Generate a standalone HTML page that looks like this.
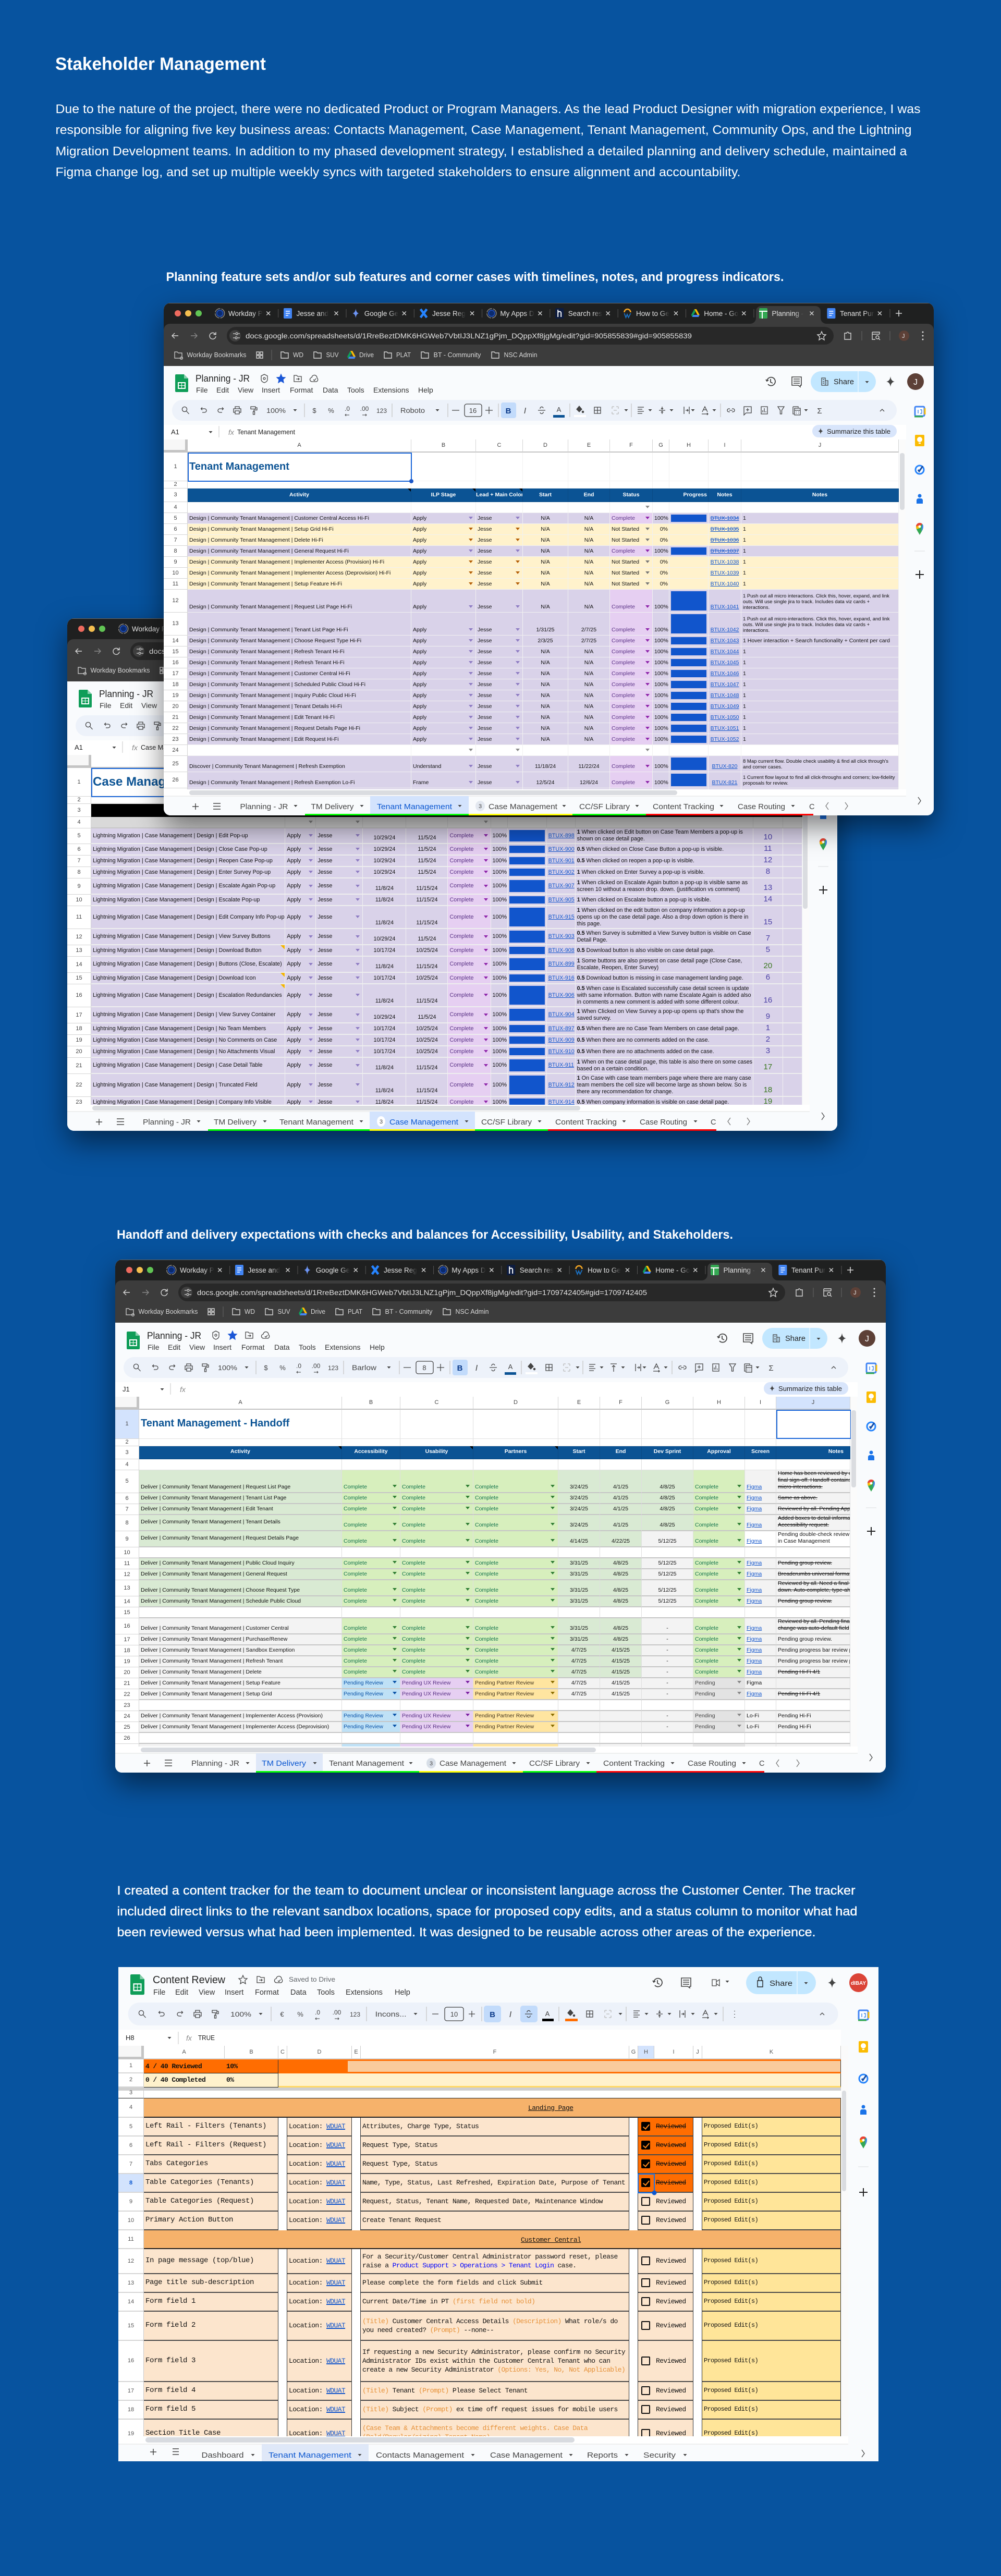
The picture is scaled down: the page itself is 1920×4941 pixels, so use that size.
<!DOCTYPE html>
<html lang="en"><head><meta charset="utf-8"><title>Stakeholder Management</title>
<style>
html,body{margin:0;padding:0;background:#07539f}
#p{position:relative;width:1920px;height:4941px;overflow:hidden;background:#07539f;font-family:"Liberation Sans",sans-serif}
svg text{font-family:"Liberation Sans",sans-serif}
.w{position:absolute;background:#f9fbfd;overflow:hidden;border-radius:13px;box-shadow:0 22px 55px rgba(0,0,0,.5)}
.s{position:absolute;left:0;top:262px;width:1410px;height:671px;overflow:hidden;background:#fff}
.c{position:absolute;left:0;top:0}
table{border-collapse:separate;border-spacing:0;table-layout:fixed;width:100%;font:10.5px/13px "Liberation Sans",sans-serif;color:#111}
td,th{padding:0 3px 3px;border-right:1px solid #f1f1f1;border-bottom:1px solid #f1f1f1;white-space:nowrap;overflow:hidden;box-sizing:border-box;position:relative;font-weight:400;vertical-align:bottom;text-align:left}
tr{height:21px}
.h14{height:14px}.h25{height:25px}.h26{height:26px}.h31{height:31px}.h44{height:44px}.h55{height:55px}.h56{height:56px}
th{text-align:center;vertical-align:middle;background:#fff;color:#444;border-color:#d4d4d4;padding:0;font-size:11px}
.l th{border-bottom:2px solid #c4c4c4;border-right:1px solid #d4d4d4;color:#444;font-size:11px}
.l th:first-child{background:#f7f7f7;border-right:5px solid #c4c4c4;border-bottom:5px solid #c4c4c4}
.hd td{background:#0b5394;color:#fff;font-weight:700;text-align:center;vertical-align:middle;padding:0;border-color:#0a4a85}
.n::before{content:"";position:absolute;top:0;right:0;border:3px solid;border-color:#000 #000 transparent transparent}
.nt::before{content:"";position:absolute;top:0;right:0;border:4px solid;border-color:#f4b400 #f4b400 transparent transparent}
.ti{font-size:20px;line-height:24px;font-weight:700;color:#0b5394;padding:0 0 0 3px;vertical-align:middle;overflow:visible}
.p{background:#d9d2e9}.y{background:#fff2cc}
.d::after{content:"";position:absolute;right:5px;bottom:8px;border-left:4px solid transparent;border-right:4px solid transparent;border-top:5px solid #8e7cc3}
.y .d::after{border-top-color:#b45f06}
.e .d::after{border-top-color:#8a8a8a}
.c1{background:#e6cff2;color:#5a3286}
.c1.d::after{border-top-color:#8e24aa}
.b{background:#1155cc;box-shadow:inset 0 0 0 3px #d9d2e9}
.ne{color:#111}.ne.d::after{border-top-color:#777}
u{color:#1155cc}
.xx{text-decoration:underline line-through;color:#1155cc}
.w1 td:nth-child(5),.w1 td:nth-child(6),.w1 td:nth-child(10){text-align:center}
.w1 td:nth-child(8){text-align:right;padding-right:2px}
.w2 table{font-size:10.75px}
.w2 td{vertical-align:middle;padding:0 3px;border-bottom:2px solid #eee}
.w2 td:nth-child(5),.w2 td:nth-child(6){vertical-align:bottom;text-align:center;padding-bottom:3px}
.w2 td:nth-child(8){text-align:right;padding-right:2px}
.w2 .d::after{bottom:auto;top:50%;margin-top:-3px}
.w2 td:nth-child(12){font-size:15px;line-height:18px;color:#4a3fa5;text-align:center;vertical-align:bottom;padding-bottom:2px}
.w2 td.gn{color:#38761d}
.w2 .ti{font-size:24px;line-height:28px;color:#0b5394;vertical-align:middle}
.w2 .bk td{background:#000;border-color:#000}
.w2 .gr td{background:#d9d9d9;border-color:#c8c8c8}
.w3 td{border-right:1px solid #dfdfdf;border-bottom:2px solid #c6c6c6;padding-bottom:3px}
.w3 .hd td{border-color:#0a4a85;border-bottom:1px solid #0a4a85}
.w3 .bl td{border-bottom:1px solid #e2e2e2}
.w3 .wt td{border-bottom:2px solid #c6c6c6}
.g td{background:#d9ead3}
.w3 td.z{background:#f3f3f3}
.w3 td.w0{background:#fff}
.w3 td.k{background:#d7efbd;color:#11734b}
.w3 td.r{background:#bfe1f6;color:#0a53a8}
.w3 td.v{background:#e6cff2;color:#5a3286}
.w3 td.a{background:#ffe5a0;color:#473821}
.w3 td.q{background:#e3e3e3;color:#444}
.w3 td.d::after{right:6px;bottom:9px;border-top-color:#2e7d32}
.w3 td.r.d::after{border-top-color:#0a53a8}
.w3 td.v.d::after{border-top-color:#7b1fa2}
.w3 td.a.d::after{border-top-color:#8a6d00}
.w3 td.q.d::after{border-top-color:#888}
.w3 td:nth-child(6),.w3 td:nth-child(7),.w3 td:nth-child(8){text-align:center}
.st{text-decoration:line-through}
.w4 td{background:#fce5cd;border-right:1px solid #333;border-bottom:2px solid #4a4a4a;padding:0 3px;vertical-align:middle;font:13px/17.3px "Liberation Mono",monospace;letter-spacing:-.6px;color:#111}
.w4 th{border-right:1px solid #ccc;border-bottom:2px solid #d6d6d6;color:#555}
.w4 td.f{font-size:14px;letter-spacing:-.4px}
.w4 td.o1{background:#fff;border-right:1px solid #333;border-bottom:0}
.w4 td.pe{background:#ffe599;font-size:12px;letter-spacing:-.7px}
.w4 td.sc{background:#f6b26b;text-decoration:none;border-bottom:2px solid #222}
.w4 td.sc span{text-decoration:underline;position:absolute;top:10px}
.w4 td.cb{padding:0;border-right:0}
.w4 td.or{background:#ff6d01}
.w4 td.sk{text-decoration:line-through}
.w4 i{position:absolute;left:6px;top:50%;margin-top:-9px;width:17px;height:17px;box-sizing:border-box;border:2px solid #111;border-radius:2px;background:#fff0;display:block}
.w4 .or i{background:#000;border-color:#000}
.w4 .or i::after{content:"";position:absolute;left:4px;top:0;width:5px;height:10px;border:solid #ff8a1f;border-width:0 2px 2px 0;transform:rotate(40deg)}
.w4 em{font-style:normal;color:#e69138}
.w4 td b{font-weight:400;color:#0000ff}
.w4 u{color:#1155cc;text-decoration-thickness:2px}
.w4 .tp td{border-bottom:1px solid #222}
</style></head><body><div id="p">

<svg width="0" height="0" style="position:absolute">
<defs>
<linearGradient id="tf"><stop offset=".72" stop-color="#e3e3e3"/><stop offset="1" stop-color="#e3e3e3" stop-opacity="0"/></linearGradient>
<g id="x"><path d="M-3.5-3.5L3.5 3.5M3.5-3.5L-3.5 3.5"/></g>
<g id="tri"><path d="M-3.5-2H3.5L0 2Z" fill="#444" stroke="none"/></g>
<g id="search"><circle cx="-2" cy="-2" r="4.6"/><path d="M1.5 1.5L6.5 7"/></g>
<g id="undo"><path d="M-3-5.5L-5.5-3-3-.5M-5.5-3H1.5a3.5 3.5 0 0 1 0 7H-3"/></g>
<g id="redo"><path d="M3-5.5L5.5-3 3-.5M5.5-3H-1.5a3.5 3.5 0 0 0 0 7H3"/></g>
<g id="print"><path d="M-4-3V-7H4V-3M-4 4H-7V-3H7V4H4M-4 1H4V7H-4Z"/></g>
<g id="paint"><path d="M-6-7H3V-2.5H-6ZM3-5H6V-.5H0V2.5M-1.5 2.5H1.5V8H-1.5Z"/></g>
<g id="strike"><path d="M-7 0H7M-3-3a3 3 0 0 1 6-1M3 3a3 3 0 0 1-6 1"/></g>
<g id="bucket"><path d="M-1-8L4-2-1 3-6-2Z" fill="#444"/><circle cx="6" cy="3" r="1.6" fill="#444"/></g>
<g id="border"><path d="M-6-6H6V6H-6ZM0-6V6M-6 0H6"/></g>
<g id="merge"><path d="M-6-7H-2M2-7H6M-6 7H-2M2 7H6M-6-7V-3M6-7V-3M-6 3V7M6 3V7M-3 0H3" stroke="#bbb"/></g>
<g id="align"><path d="M-6-6H6M-6-2H3M-6 2H6M-6 6H3"/></g>
<g id="valign"><path d="M-6 0H6M0-7V-2M-2-4L0-2 2-4M0 7V2M-2 4L0 2 2 4"/></g>
<g id="vtop"><path d="M-6-7H6M0 8V-4M-3-1L0-4 3-1"/></g>
<g id="wrap"><path d="M-5-7V7M5-7V7M-2 0H3M1-2L3 0 1 2"/></g>
<g id="rot"><path d="M-5 3L0-7 5 3M-3-1H3M-6 7H6M4 5L6 7 4 9"/></g>
<g id="link"><path d="M-2-3H-4a3 3 0 0 0 0 6H-2M2-3H4a3 3 0 0 1 0 6H2M-3 0H3"/></g>
<g id="cmt"><path d="M-7-7H7V5H-3L-7 9ZM0-4V2M-3-1H3"/></g>
<g id="chart"><path d="M-6-7H6V7H-6ZM-3 4V0M0 4V-4M3 4V2"/></g>
<g id="filter"><path d="M-6-7H6L1.5 0V7H-1.5V0Z"/></g>
<g id="calc"><path d="M-7-7H3V-5M-7-7V7H-5M-4-4H7V9H-4ZM-4 0H7M-1 3H0M3 3H4M-1 6H0M3 6H4"/></g>
<g id="caret"><path d="M-4 2L0-2 4 2"/></g>
<g id="hist"><path d="M-7-1a8 8 0 1 1 2 6M-9-4L-7-1-4-3M0-5V1L4 3" stroke-width="1.8"/></g>
<g id="cmts"><path d="M-9-9H9V7H7V10L3 7H-9ZM-6-5H6M-6-1H6M-6 3H6" stroke-width="1.6"/></g>
<g id="bldg"><path d="M-6-7H1V7H-6ZM1-2H6V7H1ZM-4-4H-1M-4 0H-1M-4 3H-1M3 1H4M3 4H4"/></g>
<g id="gem"><path d="M0-10Q1-1 8 0Q1 1 0 10Q-1 1-8 0Q-1-1 0-10Z" fill="#444" stroke="none"/></g>
<g id="back"><path d="M6 0H-6M-1-5L-6 0-1 5"/></g>
<g id="fwd"><path d="M-6 0H6M1-5L6 0 1 5"/></g>
<g id="reload"><path d="M5-3a6 6 0 1 0 1 4M6-7V-2.5H1.5"/></g>
<g id="star"><path d="M0-8L2.4-2.5 8-2 3.8 1.8 5 8 0 4.8-5 8-3.8 1.8-8-2-2.4-2.5Z"/></g>
<g id="folder"><path d="M-7-6H-2L0-4H7V6H-7Z"/></g>
<g id="mv"><path d="M-7-6H-2L0-4H7V6H-7ZM-3 1H3M1-1L3 1 1 3"/></g>
<g id="cloud"><path d="M-4 6a4 4 0 0 1-1-8 5 5 0 0 1 10 1 4 4 0 0 1-1 7ZM-2 2L0 4 3 0"/></g>
<g id="at"><path d="M-6-5L0-8 6-5V2C6 5 3 7 0 8-3 7-6 5-6 2Z"/><circle r="2"/></g>
<g id="grid"><path d="M-6-6H-1V-1H-6ZM1-6H6V-1H1ZM-6 1H-1V6H-6ZM1 1H6V6H1Z"/></g>
<g id="ext"><path d="M-6-5H-2a2 2 0 0 1 4 0H6V7H-6Z"/></g>
<g id="reader"><path d="M-7-7H7V-3M-7-7V7H-1M-7-3H7"/><circle cx="3" cy="3" r="3"/><path d="M5 5L8 8"/></g>
<g id="wday"><circle r="9" fill="none" stroke="#8a8a8a" stroke-dasharray="13 2"/><circle r="6" fill="#0a2a6e" stroke="#1e4bb0" stroke-width="2"/></g>
<g id="doc"><rect x="-8" y="-10" width="16" height="20" rx="2" fill="#4285f4" stroke="none"/><path d="M-4-4H4M-4 0H4M-4 4H1" stroke="#fff" stroke-width="1.6"/></g>
<g id="gmn"><path d="M0-9Q1-1 6 0Q1 1 0 9Q-1 1-6 0Q-1-1 0-9Z" fill="#6d95f5" stroke="none"/></g>
<g id="jira"><path d="M-6-8L6 8M6-8L-6 8" stroke="#2684ff" stroke-width="4.5"/></g>
<g id="hh"><rect x="-8" y="-10" width="16" height="20" rx="1" fill="#0d1c40" stroke="none"/><path d="M-3-7V7M-3-1a3 3 0 0 1 6 1V7" stroke="#fff" stroke-width="2"/></g>
<g id="wk"><path d="M-6 0a6 6 0 0 1 12 0" stroke="#f5a623" stroke-width="2.5"/><path d="M-6 2L-3 10-.5 4 2 10 6 2" stroke="#1a73c8" stroke-width="1.8"/></g>
<g id="drv"><path d="M-2-8H2L8 3H4Z" fill="#fbbc04" stroke="none"/><path d="M-2-8L-8 3-6 7 0-3Z" fill="#0f9d58" stroke="none"/><path d="M-6 7H6L8 3H-4Z" fill="#4285f4" stroke="none"/></g>
<g id="shs"><rect x="-8" y="-10" width="16" height="20" rx="2" fill="#34a853" stroke="none"/><path d="M-8-4H8M-2-4V10" stroke="#fff" stroke-width="2"/></g>
<g id="sheet"><path d="M2 0H17L25 8V32a2 2 0 0 1-2 2H2a2 2 0 0 1-2-2V2a2 2 0 0 1 2-2Z" fill="#0f9d58" stroke="none"/><path d="M17 0L25 8H17Z" fill="#87ceac" stroke="none"/><path fill-rule="evenodd" d="M5 15H20V28H5ZM7 17V21H12V17ZM13 17V21H18V17ZM7 22V26H12V22ZM13 22V26H18V22Z" fill="#fff" stroke="none"/></g>
<g id="cal"><rect x="-9" y="-9" width="18" height="18" rx="2" fill="#fff" stroke="#4285f4" stroke-width="3"/><path d="M-10 10H6" stroke="#34a853" stroke-width="3"/><path d="M10-6V6" stroke="#fbbc04" stroke-width="3"/><path d="M-3-3V4M1-3H4V4H1" stroke="#1a73e8" stroke-width="1.2" fill="none"/></g>
<g id="keep"><rect x="-9" y="-11" width="18" height="22" rx="2" fill="#fbbc04"/><circle cy="-2" r="5" fill="#fff"/><rect x="-2" y="4" width="4" height="2" fill="#fff"/></g>
<g id="tasks"><circle r="8" fill="none" stroke="#2684fc" stroke-width="3"/><path d="M-3 0L-1 3 6-7" fill="none" stroke="#174ea6" stroke-width="3"/></g>
<g id="cont"><circle cy="-6" r="3.5" fill="#1a73e8"/><path d="M-6 9V2a4 4 0 0 1 4-3h4a4 4 0 0 1 4 3V9Z" fill="#1a73e8"/></g>
<g id="maps"><path d="M0 13C-3 7-7 3-7-3a7 7 0 0 1 14 0C7 3 3 7 0 13Z" fill="#34a853"/><path d="M-7-3a7 7 0 0 1 12-5L-5 2Z" fill="#ea4335"/><path d="M5-8a7 7 0 0 1 2 5C7 0 5 3 3 6Z" fill="#4285f4"/><path d="M-7-3C-7 0-6 1-5 2L0 0-2-5Z" fill="#fbbc04"/><circle cy="-3" r="2.5" fill="#fff"/></g>
<g id="plus"><path d="M-8 0H8M0-8V8" stroke="#222" stroke-width="2" fill="none"/></g>

<g id="tbar" fill="none" stroke="#444" stroke-width="1.3">
<use href="#search" x="42"/><use href="#undo" x="77"/><use href="#redo" x="109"/><use href="#print" x="141"/><use href="#paint" x="173"/>
<use href="#tri" x="252"/><use href="#tri" x="525"/><use href="#tri" x="887" stroke="none"/>
<path d="M270-13V13M438-13V13M545-13V13M642-13V13M779-13V13M897-13V13M1068-13V13" stroke="#c7c7c7"/>
<path d="M553 0H567M617 0H631M624-7V7"/>
<rect x="577" y="-12" width="33" height="24" rx="4"/>
<rect x="647" y="-15" width="29" height="30" rx="4" fill="#c2dbfb" stroke="none"/>
<use href="#strike" x="725"/><use href="#bucket" x="798"/><rect x="787" y="9" width="23" height="4" fill="#fff" stroke="none"/><use href="#border" x="832"/><use href="#merge" x="866"/>
<use href="#align" x="915"/><use href="#tri" x="933"/><use href="#tri" x="974"/><use href="#wrap" x="1003"/><use href="#tri" x="1015"/><use href="#rot" x="1038"/><use href="#tri" x="1056"/>
<use href="#link" x="1088"/><use href="#cmt" x="1120"/><use href="#chart" x="1152"/><use href="#filter" x="1184"/><use href="#calc" x="1214"/><use href="#tri" x="1232"/><use href="#caret" x="1378"/>
<rect x="747" y="9" width="22" height="5" fill="#0b5394" stroke="none"/>
</g>

<g id="ctabs" fill="none" stroke="#d8d8d8" stroke-width="1.4">
<use href="#wday" x="107.7" y="20"/><use href="#doc" x="238" y="20"/><use href="#gmn" x="368.3" y="20"/><use href="#jira" x="498.6" y="20"/><use href="#wday" x="628.9" y="20"/><use href="#hh" x="759.2" y="20"/><use href="#wk" x="889.5" y="18"/><use href="#drv" x="1019.8" y="20"/><use href="#shs" x="1150" y="20"/><use href="#doc" x="1280.4" y="20"/>
<use href="#x" x="200.7" y="20"/><use href="#x" x="331" y="20"/><use href="#x" x="461.3" y="20"/><use href="#x" x="591.6" y="20"/><use href="#x" x="721.9" y="20"/><use href="#x" x="852.2" y="20"/><use href="#x" x="982.5" y="20"/><use href="#x" x="1112.8" y="20"/><use href="#x" x="1243" y="20"/><use href="#x" x="1373.4" y="20"/>
<path d="M219.7 12V28M350 12V28M480.3 12V28M610.6 12V28M740.9 12V28M871.2 12V28M1001.5 12V28M1132 12V28M1393 12V28" stroke="#555" stroke-width="1"/>
<path d="M1404 20H1416M1410 14V26" stroke-width="1.6"/>
<use href="#back" x="22" y="63"/><use href="#fwd" x="58" y="63" stroke="#888"/><use href="#reload" x="94" y="63"/>
<use href="#star" x="1262" y="63"/><use href="#ext" x="1312" y="63"/><path d="M1339 54V72M1393 54V72" stroke="#666" stroke-width="1"/><use href="#reader" x="1366" y="63"/>
<circle cx="1456" cy="56" r="1.5" fill="#ddd" stroke="none"/><circle cx="1456" cy="63" r="1.5" fill="#ddd" stroke="none"/><circle cx="1456" cy="70" r="1.5" fill="#ddd" stroke="none"/>
<circle cx="1420" cy="63" r="10" fill="#5d4037" stroke="none"/>
<path d="M133 59H137M143 59H146M133 67H136M142 67H146" stroke-width="1.2"/><circle cx="140" cy="59" r="2" stroke-width="1.2"/><circle cx="139" cy="67" r="2" stroke-width="1.2"/>
<path d="M21 94H26L28 96H35V106H21Z" stroke-width="1.2"/><circle cx="34" cy="106" r="2.5" stroke-width="1"/>
<use href="#grid" x="184" y="100"/><path d="M207 90V110" stroke="#666" stroke-width="1"/>
<use href="#folder" x="232" y="100"/><use href="#folder" x="295" y="100"/><use href="#drv" x="360" y="100"/><use href="#folder" x="430" y="100"/><use href="#folder" x="501" y="100"/><use href="#folder" x="636" y="100"/>
</g>

<g id="chead" fill="none" stroke="#444" stroke-width="1.3">
<use href="#at" x="193" y="145"/><use href="#star" x="225" y="145" fill="#1a56d6" stroke="#1a56d6"/><use href="#mv" x="257" y="145"/><use href="#cloud" x="289" y="145"/>
<use href="#hist" x="1164" y="151"/><use href="#cmts" x="1214" y="151"/>
<use href="#bldg" x="1268" y="151"/><use href="#tri" x="1349" y="152"/><use href="#gem" x="1394" y="151"/>
</g>

<g id="side"><use href="#cal" x="1450" y="208"/><use href="#keep" x="1450" y="264"/><use href="#tasks" x="1450" y="320"/><use href="#cont" x="1450" y="376"/><use href="#maps" x="1450" y="432"/><path d="M1440 476H1460" stroke="#dadce0"/><use href="#plus" x="1450" y="521"/><path d="M1447 948L1452 955 1447 962" fill="none" stroke="#444" stroke-width="1.3"/></g>

<g id="tsym" fill="none" stroke="#444" stroke-width="1.5"><path d="M55 966H67M61 960V972M95 960H109M95 965.5H109M95 971H109"/></g>
</defs>
</svg>

<svg class="c" width="1920" height="560" style="z-index:0">
<text x="106" y="134" font-size="34" font-weight="700" fill="#fff" textLength="404" lengthAdjust="spacingAndGlyphs">Stakeholder Management</text>
<g font-size="24" fill="#fff">
<text x="106.5" y="217" textLength="1659" lengthAdjust="spacingAndGlyphs">Due to the nature of the project, there were no dedicated Product or Program Managers. As the lead Product Designer with migration experience, I was</text>
<text x="106.5" y="257" textLength="1642" lengthAdjust="spacingAndGlyphs">responsible for aligning five key business areas: Contacts Management, Case Management, Tenant Management, Community Ops, and the Lightning</text>
<text x="106.5" y="298" textLength="1633" lengthAdjust="spacingAndGlyphs">Migration Development teams. In addition to my phased development strategy, I established a detailed planning and delivery schedule, maintained a</text>
<text x="106.5" y="338" textLength="1314" lengthAdjust="spacingAndGlyphs">Figma change log, and set up multiple weekly syncs with targeted stakeholders to ensure alignment and accountability.</text>
</g>
<text x="318.5" y="539" font-size="24" font-weight="700" fill="#fff" textLength="1185" lengthAdjust="spacingAndGlyphs">Planning feature sets and/or sub features and corner cases with timelines, notes, and progress indicators.</text>
</svg>

<!-- WINDOW 2 (behind) -->
<div class="w w2" style="left:129px;top:1186px;width:1477px;height:983px;z-index:1">
<div class="s"><table><colgroup><col style="width:46px"><col style="width:372px"><col style="width:59px"><col style="width:90px"><col style="width:83px"><col style="width:80px"><col style="width:82px"><col style="width:32px"><col style="width:75px"><col style="width:55px"><col style="width:341px"><col style="width:57px"><col style="width:37px"></colgroup>
<tr class="l h25"><th><th>A<th>B<th>C<th>D<th>E<th>F<th>G<th>H<th>I<th>J<th>K<th>L</tr>
<tr class="h55"><th>1<td class="ti">Case Management<td><td><td><td><td><td><td><td><td><td><td></tr>
<tr class="h14"><th>2<td><td><td><td><td><td><td><td><td><td><td><td></tr>
<tr class="bk h25"><th>3<td><td><td><td><td><td><td><td><td><td><td><td></tr>
<tr class="gr e" style="height:22px"><th>4<td><td class="d"><td class="d"><td><td><td class="d"><td><td><td><td><td><td></tr>
<tr class="p h31" style="height:30px"><th>5<td>Lightning Migration | Case Management | Design | Edit Pop-up<td class="d">Apply<td class="d">Jesse<td>10/29/24<td>11/5/24<td class="c1 d">Complete<td>100%<td class="b"><td><u>BTUX-898</u><td><b>1</b> When clicked on Edit button on Case Team Members a pop-up is<br>shown on case detail page.<td>10<td></tr>
<tr class="p"><th>6<td>Lightning Migration | Case Management | Design | Close Case Pop-up<td class="d">Apply<td class="d">Jesse<td>10/29/24<td>11/5/24<td class="c1 d">Complete<td>100%<td class="b"><td><u>BTUX-900</u><td><b>0.5</b> When clicked on Close Case Button a pop-up is visible.<td>11<td></tr>
<tr class="p"><th>7<td>Lightning Migration | Case Management | Design | Reopen Case Pop-up<td class="d">Apply<td class="d">Jesse<td>10/29/24<td>11/5/24<td class="c1 d">Complete<td>100%<td class="b"><td><u>BTUX-901</u><td><b>0.5</b> When clicked on reopen a pop-up is visible.<td>12<td></tr>
<tr class="p"><th>8<td>Lightning Migration | Case Management | Design | Enter Survey Pop-up<td class="d">Apply<td class="d">Jesse<td>10/29/24<td>11/5/24<td class="c1 d">Complete<td>100%<td class="b"><td><u>BTUX-902</u><td><b>1</b> When clicked on Enter Survey a pop-up is visible.<td>8<td></tr>
<tr class="p h31"><th>9<td>Lightning Migration | Case Management | Design | Escalate Again Pop-up<td class="d">Apply<td class="d">Jesse<td>11/8/24<td>11/15/24<td class="c1 d">Complete<td>100%<td class="b"><td><u>BTUX-907</u><td><b>1</b> When clicked on Escalate Again button a pop-up is visible same as<br>screen 10 without a reason drop. down. (justification vs comment)<td>13<td></tr>
<tr class="p"><th>10<td>Lightning Migration | Case Management | Design | Escalate Pop-up<td class="d">Apply<td class="d">Jesse<td>11/8/24<td>11/15/24<td class="c1 d">Complete<td>100%<td class="b"><td><u>BTUX-905</u><td><b>1</b> When clicked on Escalate button a pop-up is visible.<td>14<td></tr>
<tr class="p h44"><th>11<td>Lightning Migration | Case Management | Design | Edit Company Info Pop-up<td class="d">Apply<td class="d">Jesse<td>11/8/24<td>11/15/24<td class="c1 d">Complete<td>100%<td class="b"><td><u>BTUX-915</u><td><b>1</b> When clicked on the edit button on company information a pop-up<br>opens up on the case detail page. Also a drop down option is there in<br>this page.<td>15<td></tr>
<tr class="p h31"><th>12<td>Lightning Migration | Case Management | Design | View Survey Buttons<td class="d">Apply<td class="d">Jesse<td>10/29/24<td>11/5/24<td class="c1 d">Complete<td>100%<td class="b"><td><u>BTUX-903</u><td><b>0.5</b> When Survey is submitted a View Survey button is visible on Case<br>Detail Page.<td>7<td></tr>
<tr class="p"><th>13<td class="nt">Lightning Migration | Case Management | Design | Download Button<td class="d">Apply<td class="d">Jesse<td>10/17/24<td>10/25/24<td class="c1 d">Complete<td>100%<td class="b"><td><u>BTUX-908</u><td><b>0.5</b> Download button is also visible on case detail page.<td>5<td></tr>
<tr class="p h31"><th>14<td>Lightning Migration | Case Management | Design | Buttons (Close, Escalate)<td class="d">Apply<td class="d">Jesse<td>11/8/24<td>11/15/24<td class="c1 d">Complete<td>100%<td class="b"><td><u>BTUX-899</u><td><b>1</b> Some buttons are also present on case detail page (Close Case,<br>Escalate, Reopen, Enter Survey)<td class="gn">20<td></tr>
<tr class="p"><th>15<td class="nt">Lightning Migration | Case Management | Design | Download Icon<td class="d">Apply<td class="d">Jesse<td>10/17/24<td>10/25/24<td class="c1 d">Complete<td>100%<td class="b"><td><u>BTUX-916</u><td><b>0.5</b> Download button is missing in case management landing page.<td>6<td></tr>
<tr class="p h44"><th>16<td class="nt">Lightning Migration | Case Management | Design | Escalation Redundancies<td class="d">Apply<td class="d">Jesse<td>11/8/24<td>11/15/24<td class="c1 d">Complete<td>100%<td class="b"><td><u>BTUX-906</u><td><b>0.5</b> When case is Escalated successfully case detail screen is update<br>with same information. Button with name Escalate Again is added also<br>in comments a new comment is added with some different colour.<td>16<td></tr>
<tr class="p h31"><th>17<td>Lightning Migration | Case Management | Design | View Survey Container<td class="d">Apply<td class="d">Jesse<td>10/29/24<td>11/5/24<td class="c1 d">Complete<td>100%<td class="b"><td><u>BTUX-904</u><td><b>1</b> When Clicked on View Survey a pop-up opens up that's show the<br>saved survey.<td>9<td></tr>
<tr class="p"><th>18<td>Lightning Migration | Case Management | Design | No Team Members<td class="d">Apply<td class="d">Jesse<td>10/17/24<td>10/25/24<td class="c1 d">Complete<td>100%<td class="b"><td><u>BTUX-897</u><td><b>0.5</b> When there are no Case Team Members on case detail page.<td>1<td></tr>
<tr class="p"><th>19<td>Lightning Migration | Case Management | Design | No Comments on Case<td class="d">Apply<td class="d">Jesse<td>10/17/24<td>10/25/24<td class="c1 d">Complete<td>100%<td class="b"><td><u>BTUX-909</u><td><b>0.5</b> When there are no comments added on the case.<td>2<td></tr>
<tr class="p"><th>20<td>Lightning Migration | Case Management | Design | No Attachments Visual<td class="d">Apply<td class="d">Jesse<td>10/17/24<td>10/25/24<td class="c1 d">Complete<td>100%<td class="b"><td><u>BTUX-910</u><td><b>0.5</b> When there are no attachments added on the case.<td>3<td></tr>
<tr class="p h31"><th>21<td>Lightning Migration | Case Management | Design | Case Detail Table<td class="d">Apply<td class="d">Jesse<td>11/8/24<td>11/15/24<td class="c1 d">Complete<td>100%<td class="b"><td><u>BTUX-911</u><td><b>1</b> When on the case detail page, this table is also there on some cases<br>based on a certain condition.<td class="gn">17<td></tr>
<tr class="p h44"><th>22<td>Lightning Migration | Case Management | Design | Truncated Field<td class="d">Apply<td class="d">Jesse<td>11/8/24<td>11/15/24<td class="c1 d">Complete<td>100%<td class="b"><td><u>BTUX-912</u><td><b>1</b> On Case with case team members page where there are many case<br>team members the cell size will become large as shown below. So is<br>there any recommendation for change.<td class="gn">18<td></tr>
<tr class="p"><th>23<td>Lightning Migration | Case Management | Design | Company Info Visible<td class="d">Apply<td class="d">Jesse<td>11/8/24<td>11/15/24<td class="c1 d">Complete<td>100%<td class="b"><td><u>BTUX-914</u><td><b>0.5</b> When company information is visible on case detail page.<td class="gn">19<td></tr>
<tr class="p"><th>24<td><td><td><td><td><td><td><td><td><td><td><td></tr>
</table></div>
<svg class="c" width="1477" height="983">
<rect width="1477" height="52" fill="#1f2020"/>
<path d="M0 52a12 12 0 0 1 12-12H1477V121H0Z" fill="#3c3c3c"/>
<path d="M0 .5H1477" stroke="#666"/>
<rect x="121" y="46" width="1164" height="34" rx="17" fill="#282828"/>
<circle cx="137" cy="63" r="11" fill="#3f3f3f"/>
<circle cx="27" cy="20" r="6" fill="#ed6a5e"/><circle cx="47" cy="20" r="6" fill="#f5bf4f"/><circle cx="67" cy="20" r="6" fill="#61c554"/>
<use href="#ctabs"/>
<g font-size="13.5" fill="url(#tf)"><text x="124" y="25">Workday P</text></g>
<text x="157" y="68" font-size="14" fill="#e3e3e3" textLength="856" lengthAdjust="spacingAndGlyphs">docs.google.com/spreadsheets/d/1RreBeztDMK6HGWeb7VbtIJ3LNZ1gPjm_DQppXf8jgMg/edit?gid=905855839#gid=905855839</text>
<text x="44.5" y="104" font-size="12.5" fill="#d8d8d8" textLength="114" lengthAdjust="spacingAndGlyphs">Workday Bookmarks</text>
<use href="#sheet" x="22" y="137"/>
<text x="61" y="151" font-size="18" fill="#222" textLength="104" lengthAdjust="spacingAndGlyphs">Planning - JR</text>
<g font-size="14" fill="#333"><text x="62" y="172">File</text><text x="101" y="172">Edit</text><text x="142" y="172">View</text></g>
<rect x="16" y="186" width="1390" height="40" rx="20" fill="#edf2fa"/>
<use href="#tbar" y="206"/>
<rect x="0" y="234" width="1424" height="28" fill="#fff"/>
<use href="#chead"/>
<path d="M106 236V258" stroke="#c7c7c7"/><use href="#tri" x="90" y="248"/>
<text x="14" y="252" font-size="13" fill="#222">A1</text>
<text x="124" y="253" font-size="14" font-style="italic" fill="#888">fx</text>
<text x="141" y="252" font-size="12.5" fill="#222">Case Management</text>
<rect x="47" y="288" width="372" height="54" fill="none" stroke="#1a66d8" stroke-width="2"/>
<rect y="933" width="1424" height="13" fill="#fff"/><rect x="48" y="935" width="936" height="9" rx="4.5" fill="#dadce0"/>
<rect x="1411" y="263" width="12" height="670" fill="#fbfbfb"/><rect x="1411" y="264" width="9" height="293" rx="4" fill="#dadce0"/>
<rect y="946" width="1477" height="37" fill="#f9fbfd"/><path d="M0 946H1424" stroke="#e0e0e0"/>
<use href="#side"/>
<use href="#tsym"/>
<rect x="270" y="980" width="125" height="3" fill="#0f0"/><rect x="395" y="980" width="185" height="3" fill="#0f0"/><rect x="580" y="980" width="202" height="3" fill="#ff0"/><rect x="782" y="980" width="140" height="3" fill="#0f0"/><rect x="922" y="980" width="163" height="3" fill="#f00"/><rect x="1085" y="980" width="137" height="3" fill="#f00"/><rect x="1222" y="980" width="23" height="3" fill="#f00"/>
<rect x="580" y="946" width="202" height="34" fill="#d3e3fd"/>
<g font-size="14.5" fill="#444">
<text x="145" y="971" textLength="92" lengthAdjust="spacingAndGlyphs">Planning - JR</text>
<text x="281" y="971" textLength="82" lengthAdjust="spacingAndGlyphs">TM Delivery</text>
<text x="407" y="971" textLength="142" lengthAdjust="spacingAndGlyphs">Tenant Management</text>
<text x="618" y="971" fill="#0b57d0" textLength="132" lengthAdjust="spacingAndGlyphs">Case Management</text>
<text x="794" y="971" textLength="97" lengthAdjust="spacingAndGlyphs">CC/SF Library</text>
<text x="936" y="971" textLength="118" lengthAdjust="spacingAndGlyphs">Content Tracking</text>
<text x="1098" y="971" textLength="91" lengthAdjust="spacingAndGlyphs">Case Routing</text>
<text x="1234" y="971">C</text>
</g>
<ellipse cx="602" cy="965" rx="8" ry="10" fill="#fff"/><text x="602" y="969" font-size="11" text-anchor="middle" fill="#444">3</text>
<use href="#tri" x="252" y="965"/><use href="#tri" x="379" y="965"/><use href="#tri" x="564" y="965"/><use href="#tri" x="766" y="965"/><use href="#tri" x="906" y="965"/><use href="#tri" x="1068" y="965"/><use href="#tri" x="1205" y="965"/>
<path d="M1272 958L1267 965 1272 972M1304 958L1309 965 1304 972" fill="none" stroke="#777" stroke-width="1.3"/>
</svg>
</div>

<!-- WINDOW 1 -->
<div class="w w1" style="left:314px;top:581px;width:1477px;height:983px;z-index:2">
<div class="s"><table><colgroup><col style="width:46px"><col style="width:429px"><col style="width:124px"><col style="width:90px"><col style="width:87px"><col style="width:80px"><col style="width:82px"><col style="width:32px"><col style="width:75px"><col style="width:63px"><col style="width:302px"></colgroup>
<tr class="l h25"><th><th>A<th>B<th>C<th>D<th>E<th>F<th>G<th>H<th>I<th>J</tr>
<tr class="h55"><th>1<td class="ti">Tenant Management<td><td><td><td><td><td><td><td><td></tr>
<tr class="h14"><th>2<td><td><td><td><td><td><td><td><td><td></tr>
<tr class="hd h26"><th>3<td class="n">Activity<td class="n">ILP Stage<td class="n">Lead + Main Color<td>Start<td>End<td>Status<td colspan="2">Progress<td>Notes<td>Notes</tr>
<tr class="e"><th>4<td><td><td><td><td><td class="d"><td><td><td><td></tr>
<tr class="p"><th>5<td>Design | Community Tenant Management | Customer Central Access Hi-Fi<td class="d">Apply<td class="d">Jesse<td>N/A<td>N/A<td class="c1 d">Complete<td>100%<td class="b"><td><span class="xx">BTUX-1034</span><td>1</tr>
<tr class="y"><th>6<td>Design | Community Tenant Management | Setup Grid Hi-Fi<td class="d">Apply<td class="d">Jesse<td>N/A<td>N/A<td class="ne d">Not Started<td>0%<td><td><span class="xx">BTUX-1035</span><td>1</tr>
<tr class="y"><th>7<td>Design | Community Tenant Management | Delete Hi-Fi<td class="d">Apply<td class="d">Jesse<td>N/A<td>N/A<td class="ne d">Not Started<td>0%<td><td><span class="xx">BTUX-1036</span><td>1</tr>
<tr class="p"><th>8<td>Design | Community Tenant Management | General Request Hi-Fi<td class="d">Apply<td class="d">Jesse<td>N/A<td>N/A<td class="c1 d">Complete<td>100%<td class="b"><td><span class="xx">BTUX-1037</span><td>1</tr>
<tr class="y"><th>9<td>Design | Community Tenant Management | Implementer Access (Provision) Hi-Fi<td class="d">Apply<td class="d">Jesse<td>N/A<td>N/A<td class="ne d">Not Started<td>0%<td><td><u>BTUX-1038</u><td>1</tr>
<tr class="y"><th>10<td>Design | Community Tenant Management | Implementer Access (Deprovision) Hi-Fi<td class="d">Apply<td class="d">Jesse<td>N/A<td>N/A<td class="ne d">Not Started<td>0%<td><td><u>BTUX-1039</u><td>1</tr>
<tr class="y"><th>11<td>Design | Community Tenant Management | Setup Feature Hi-Fi<td class="d">Apply<td class="d">Jesse<td>N/A<td>N/A<td class="ne d">Not Started<td>0%<td><td><u>BTUX-1040</u><td>1</tr>
<tr class="p h44"><th>12<td>Design | Community Tenant Management | Request List Page Hi-Fi<td class="d">Apply<td class="d">Jesse<td>N/A<td>N/A<td class="c1 d">Complete<td>100%<td class="b"><td><u>BTUX-1041</u><td style="white-space:normal;font-size:9.5px;line-height:11px">1 Push out all micro interactions. Click this, hover, expand, and link outs. Will use single jira to track. Includes data viz cards + interactions.</tr>
<tr class="p h44"><th>13<td>Design | Community Tenant Management | Tenant List Page Hi-Fi<td class="d">Apply<td class="d">Jesse<td>1/31/25<td>2/7/25<td class="c1 d">Complete<td>100%<td class="b"><td><u>BTUX-1042</u><td style="white-space:normal;font-size:9.5px;line-height:11px">1 Push out all micro-interactions. Click this, hover, expand, and link outs. Will use single jira to track. Includes data viz cards + interactions.</tr>
<tr class="p"><th>14<td>Design | Community Tenant Management | Choose Request Type Hi-Fi<td class="d">Apply<td class="d">Jesse<td>2/3/25<td>2/7/25<td class="c1 d">Complete<td>100%<td class="b"><td><u>BTUX-1043</u><td>1 Hover interaction + Search functionality + Content per card</tr>
<tr class="p"><th>15<td>Design | Community Tenant Management | Refresh Tenant Hi-Fi<td class="d">Apply<td class="d">Jesse<td>N/A<td>N/A<td class="c1 d">Complete<td>100%<td class="b"><td><u>BTUX-1044</u><td>1</tr>
<tr class="p"><th>16<td>Design | Community Tenant Management | Refresh Tenant Hi-Fi<td class="d">Apply<td class="d">Jesse<td>N/A<td>N/A<td class="c1 d">Complete<td>100%<td class="b"><td><u>BTUX-1045</u><td>1</tr>
<tr class="p"><th>17<td>Design | Community Tenant Management | Customer Central Hi-Fi<td class="d">Apply<td class="d">Jesse<td>N/A<td>N/A<td class="c1 d">Complete<td>100%<td class="b"><td><u>BTUX-1046</u><td>1</tr>
<tr class="p"><th>18<td>Design | Community Tenant Management | Scheduled Public Cloud Hi-Fi<td class="d">Apply<td class="d">Jesse<td>N/A<td>N/A<td class="c1 d">Complete<td>100%<td class="b"><td><u>BTUX-1047</u><td>1</tr>
<tr class="p"><th>19<td>Design | Community Tenant Management | Inquiry Public Cloud Hi-Fi<td class="d">Apply<td class="d">Jesse<td>N/A<td>N/A<td class="c1 d">Complete<td>100%<td class="b"><td><u>BTUX-1048</u><td>1</tr>
<tr class="p"><th>20<td>Design | Community Tenant Management | Tenant Details Hi-Fi<td class="d">Apply<td class="d">Jesse<td>N/A<td>N/A<td class="c1 d">Complete<td>100%<td class="b"><td><u>BTUX-1049</u><td>1</tr>
<tr class="p"><th>21<td>Design | Community Tenant Management | Edit Tenant Hi-Fi<td class="d">Apply<td class="d">Jesse<td>N/A<td>N/A<td class="c1 d">Complete<td>100%<td class="b"><td><u>BTUX-1050</u><td>1</tr>
<tr class="p"><th>22<td>Design | Community Tenant Management | Request Details Page Hi-Fi<td class="d">Apply<td class="d">Jesse<td>N/A<td>N/A<td class="c1 d">Complete<td>100%<td class="b"><td><u>BTUX-1051</u><td>1</tr>
<tr class="p"><th>23<td>Design | Community Tenant Management | Edit Request Hi-Fi<td class="d">Apply<td class="d">Jesse<td>N/A<td>N/A<td class="c1 d">Complete<td>100%<td class="b"><td><u>BTUX-1052</u><td>1</tr>
<tr class="e"><th>24<td><td class="d"><td class="d"><td><td><td class="d"><td><td><td><td></tr>
<tr class="p h31"><th>25<td>Discover | Community Tenant Management | Refresh Exemption<td class="d">Understand<td class="d">Jesse<td>11/18/24<td>11/22/24<td class="c1 d">Complete<td>100%<td class="b"><td><u>BTUX-820</u><td style="white-space:normal;font-size:9.5px;line-height:11px">8 Map current flow. Double check usability &amp; find all click through's and corner cases.</tr>
<tr class="p h31"><th>26<td>Design | Community Tenant Management | Refresh Exemption Lo-Fi<td class="d">Frame<td class="d">Jesse<td>12/5/24<td>12/6/24<td class="c1 d">Complete<td>100%<td class="b"><td><u>BTUX-821</u><td style="white-space:normal;font-size:9.5px;line-height:11px">1 Current flow layout to find all click-throughs and corners; low-fidelity proposals for review.</tr>
<tr class="p"><th>27<td><td><td><td><td><td><td><td><td><td></tr>
</table></div>
<svg class="c" width="1477" height="983">
<rect width="1477" height="52" fill="#1f2020"/>
<path d="M0 52a12 12 0 0 1 12-12H1125a11 11 0 0 0 11-11V16a10 10 0 0 1 10-10H1250a10 10 0 0 1 10 10V29a11 11 0 0 0 11 11H1465a12 12 0 0 1 12 12V121H0Z" fill="#3c3c3c"/>
<path d="M0 .5H1477" stroke="#666"/>
<rect x="121" y="46" width="1164" height="34" rx="17" fill="#282828"/>
<circle cx="137" cy="63" r="11" fill="#3f3f3f"/>
<circle cx="27" cy="20" r="6" fill="#ed6a5e"/><circle cx="47" cy="20" r="6" fill="#f5bf4f"/><circle cx="67" cy="20" r="6" fill="#61c554"/>
<use href="#ctabs"/>
<g font-size="13.5" fill="url(#tf)"><text x="124" y="25">Workday P</text><text x="254.5" y="25">Jesse and</text><text x="384.8" y="25">Google Ge</text><text x="515" y="25">Jesse Reg</text><text x="645.4" y="25">My Apps D</text><text x="775.7" y="25">Search res</text><text x="906" y="25">How to Ge</text><text x="1036.3" y="25">Home - Go</text><text x="1166.5" y="25">Planning -</text><text x="1297" y="25">Tenant Pur</text></g>
<text x="157" y="68" font-size="14" fill="#e3e3e3" textLength="856" lengthAdjust="spacingAndGlyphs">docs.google.com/spreadsheets/d/1RreBeztDMK6HGWeb7VbtIJ3LNZ1gPjm_DQppXf8jgMg/edit?gid=905855839#gid=905855839</text>
<text x="1416" y="67" font-size="11" fill="#e3e3e3">J</text>
<g font-size="12.5" fill="#d8d8d8"><text x="44.5" y="104" textLength="114" lengthAdjust="spacingAndGlyphs">Workday Bookmarks</text><text x="248" y="104" textLength="20" lengthAdjust="spacingAndGlyphs">WD</text><text x="311.5" y="104" textLength="24" lengthAdjust="spacingAndGlyphs">SUV</text><text x="375" y="104" textLength="28" lengthAdjust="spacingAndGlyphs">Drive</text><text x="446" y="104" textLength="28" lengthAdjust="spacingAndGlyphs">PLAT</text><text x="517.5" y="104" textLength="91" lengthAdjust="spacingAndGlyphs">BT - Community</text><text x="652.5" y="104" textLength="64" lengthAdjust="spacingAndGlyphs">NSC Admin</text></g>
<use href="#sheet" x="22" y="137"/>
<text x="61" y="151" font-size="18" fill="#222" textLength="104" lengthAdjust="spacingAndGlyphs">Planning - JR</text>
<g font-size="14" fill="#333"><text x="62" y="172">File</text><text x="101" y="172">Edit</text><text x="142" y="172">View</text><text x="188" y="172">Insert</text><text x="242" y="172">Format</text><text x="305" y="172">Data</text><text x="352" y="172">Tools</text><text x="402" y="172">Extensions</text><text x="488" y="172">Help</text></g>
<rect x="1241" y="131" width="125" height="40" rx="20" fill="#c2e7ff"/><path d="M1332 131V171" stroke="#fff"/>
<use href="#chead"/>
<text x="1285" y="156" font-size="15" fill="#222" textLength="39" lengthAdjust="spacingAndGlyphs">Share</text>
<circle cx="1442" cy="151" r="16" fill="#5d4037"/><text x="1442" y="157" font-size="16" fill="#fff" text-anchor="middle">J</text>
<rect x="16" y="186" width="1390" height="40" rx="20" fill="#edf2fa"/>
<use href="#tbar" y="206"/>
<g fill="none" stroke="#444" stroke-width="1.3"><use href="#valign" x="956" y="206"/></g>
<g fill="#444" font-size="13"><text x="197" y="211" textLength="37" lengthAdjust="spacingAndGlyphs">100%</text><text x="289" y="211" text-anchor="middle">$</text><text x="321" y="211" text-anchor="middle">%</text><text x="352" y="207" text-anchor="middle" font-size="12">.0</text><text x="385" y="207" text-anchor="middle" font-size="12">.00</text><text x="418" y="211" text-anchor="middle" font-size="12">123</text><text x="454" y="211" textLength="47" lengthAdjust="spacingAndGlyphs" font-size="14">Roboto</text><text x="593" y="211" text-anchor="middle">16</text><text x="661" y="212" text-anchor="middle" font-weight="700" font-size="15" fill="#0b3a8a">B</text><text x="693" y="212" text-anchor="middle" font-style="italic" font-size="16" font-family="Liberation Serif">I</text><text x="758" y="209" text-anchor="middle">A</text><text x="1258" y="212" text-anchor="middle" font-size="15">Σ</text></g>
<path d="M348 215H356M350 213L348 215 350 217M381 215H389M387 213L389 215 387 217" stroke="#444" fill="none"/>
<rect x="0" y="234" width="1424" height="28" fill="#fff"/>
<path d="M106 236V258" stroke="#c7c7c7"/><use href="#tri" x="90" y="248"/>
<text x="14" y="252" font-size="13" fill="#222">A1</text>
<text x="124" y="253" font-size="14" font-style="italic" fill="#888">fx</text>
<text x="141" y="252" font-size="12.5" fill="#222" textLength="111" lengthAdjust="spacingAndGlyphs">Tenant Management</text>
<rect x="1244" y="234" width="162" height="24" rx="12" fill="#d8e5fb"/><use href="#gem" transform="translate(1260 246) scale(.6)"/>
<text x="1272" y="251" font-size="13" fill="#222" textLength="122" lengthAdjust="spacingAndGlyphs">Summarize this table</text>
<rect x="47" y="288" width="428" height="54" fill="none" stroke="#1a66d8" stroke-width="2"/><circle cx="475" cy="342" r="4" fill="#1a56c8"/>
<rect y="933" width="1424" height="13" fill="#fff"/><rect x="49" y="935" width="936" height="9" rx="4.5" fill="#dadce0"/>
<rect x="1411" y="263" width="12" height="670" fill="#fbfbfb"/><rect x="1412" y="288" width="9" height="109" rx="4" fill="#dadce0"/>
<rect y="946" width="1477" height="37" fill="#f9fbfd"/><path d="M0 946H1424" stroke="#e0e0e0"/>
<use href="#side"/>
<use href="#tsym"/>
<rect x="396" y="946" width="189" height="34" fill="#d3e3fd"/>
<rect x="271" y="980" width="125" height="3" fill="#0f0"/><rect x="396" y="980" width="189" height="3" fill="#0f0"/><rect x="585" y="980" width="199" height="3" fill="#ff0"/><rect x="784" y="980" width="141" height="3" fill="#0f0"/><rect x="925" y="980" width="162" height="3" fill="#f00"/><rect x="1087" y="980" width="136" height="3" fill="#f00"/><rect x="1223" y="980" width="23" height="3" fill="#f00"/>
<g font-size="14.5" fill="#444">
<text x="146.5" y="971" textLength="92" lengthAdjust="spacingAndGlyphs">Planning - JR</text>
<text x="282.5" y="971" textLength="82" lengthAdjust="spacingAndGlyphs">TM Delivery</text>
<text x="409" y="971" fill="#0b57d0" textLength="144" lengthAdjust="spacingAndGlyphs">Tenant Management</text>
<text x="623" y="971" textLength="132" lengthAdjust="spacingAndGlyphs">Case Management</text>
<text x="797" y="971" textLength="97" lengthAdjust="spacingAndGlyphs">CC/SF Library</text>
<text x="938" y="971" textLength="118" lengthAdjust="spacingAndGlyphs">Content Tracking</text>
<text x="1101" y="971" textLength="91" lengthAdjust="spacingAndGlyphs">Case Routing</text>
<text x="1238" y="971">C</text>
</g>
<ellipse cx="607" cy="965" rx="9" ry="10" fill="#e3e8f0"/><text x="607" y="969" font-size="11" text-anchor="middle" fill="#444">3</text>
<use href="#tri" x="253" y="965"/><use href="#tri" x="380" y="965"/><use href="#tri" x="568" y="965"/><use href="#tri" x="768" y="965"/><use href="#tri" x="908" y="965"/><use href="#tri" x="1070" y="965"/><use href="#tri" x="1207" y="965"/>
<path d="M1275 958L1270 965 1275 972M1307 958L1312 965 1307 972" fill="none" stroke="#777" stroke-width="1.3"/>
</svg>
</div>

<svg class="c" width="1920" height="100" style="top:2340px;z-index:1">
<text x="224" y="36" font-size="24" font-weight="700" fill="#fff" textLength="1182" lengthAdjust="spacingAndGlyphs">Handoff and delivery expectations with checks and balances for Accessibility, Usability, and Stakeholders.</text>
</svg>

<!-- WINDOW 3 -->
<div class="w w3" style="left:221px;top:2416px;width:1478px;height:984px;z-index:2">
<div class="s" style="top:263px;height:671px"><table><colgroup><col style="width:46px"><col style="width:389px"><col style="width:112px"><col style="width:140px"><col style="width:163px"><col style="width:80px"><col style="width:80px"><col style="width:99px"><col style="width:99px"><col style="width:60px"><col style="width:142px"></colgroup>
<tr class="l h25"><th><th>A<th>B<th>C<th>D<th>E<th>F<th>G<th>H<th>I<th style="background:#d3e3fd">J</tr>
<tr class="h56 bl"><th style="background:#d3e3fd">1<td class="ti">Tenant Management - Handoff<td><td><td><td><td><td><td><td><td></tr>
<tr class="h14 bl"><th>2<td><td><td><td><td><td><td><td><td><td></tr>
<tr class="hd h25"><th>3<td class="n">Activity<td>Accessibility<td class="n">Usability<td class="n">Partners<td>Start<td>End<td>Dev Sprint<td>Approval<td>Screen<td style="text-align:right;padding-right:12px">Notes</tr>
<tr class="bl"><th>4<td><td><td><td><td><td><td><td><td><td></tr>
<tr class="g h44"><th>5<td>Deliver | Community Tenant Management | Request List Page<td class="k d">Complete<td class="k d">Complete<td class="k d">Complete<td>3/24/25<td>4/1/25<td>4/8/25<td class="k d">Complete<td class="z"><u>Figma</u><td class="z st">Home has been reviewed by all. Need a<br>final sign-off. Handoff contains<br>micro-interactions.</tr>
<tr class="g"><th>6<td>Deliver | Community Tenant Management | Tenant List Page<td class="k d">Complete<td class="k d">Complete<td class="k d">Complete<td>3/24/25<td>4/1/25<td>4/8/25<td class="k d">Complete<td class="z"><u>Figma</u><td class="z st">Same as above.</tr>
<tr class="g"><th>7<td>Deliver | Community Tenant Management | Edit Tenant<td class="k d">Complete<td class="k d">Complete<td class="k d">Complete<td>3/24/25<td>4/1/25<td>4/8/25<td class="k d">Complete<td class="z"><u>Figma</u><td class="z st">Reviewed by all. Pending Approval</tr>
<tr class="g h31"><th>8<td style="vertical-align:middle">Deliver | Community Tenant Management | Tenant Details<td class="k d">Complete<td class="k d">Complete<td class="k d">Complete<td>3/24/25<td>4/1/25<td>4/8/25<td class="k d">Complete<td class="z"><u>Figma</u><td class="z st">Added boxes to detail information<br>Accessibility request.</tr>
<tr class="g h31"><th>9<td style="vertical-align:middle">Deliver | Community Tenant Management | Request Details Page<td class="k d">Complete<td class="k d">Complete<td class="k d">Complete<td>4/14/25<td>4/22/25<td class="z">5/12/25<td class="k d">Complete<td class="w0"><u>Figma</u><td class="w0">Pending double-check review<br>in Case Management</tr>
<tr><th>10<td><td><td><td><td><td><td><td><td><td></tr>
<tr class="g"><th>11<td>Deliver | Community Tenant Management | Public Cloud Inquiry<td class="k d">Complete<td class="k d">Complete<td class="k d">Complete<td>3/31/25<td>4/8/25<td class="z">5/12/25<td class="k d">Complete<td class="z"><u>Figma</u><td class="z st">Pending group review.</tr>
<tr class="g"><th>12<td>Deliver | Community Tenant Management | General Request<td class="k d">Complete<td class="k d">Complete<td class="k d">Complete<td>3/31/25<td>4/8/25<td class="z">5/12/25<td class="k d">Complete<td class="z"><u>Figma</u><td class="z st">Breadcrumbs universal format</tr>
<tr class="g h31"><th>13<td>Deliver | Community Tenant Management | Choose Request Type<td class="k d">Complete<td class="k d">Complete<td class="k d">Complete<td>3/31/25<td>4/8/25<td class="z">5/12/25<td class="k d">Complete<td class="z"><u>Figma</u><td class="z st">Reviewed by all. Need a final drop-<br>down. Auto-complete, type-ahead</tr>
<tr class="g"><th>14<td>Deliver | Community Tenant Management | Schedule Public Cloud<td class="k d">Complete<td class="k d">Complete<td class="k d">Complete<td>3/31/25<td>4/8/25<td class="z">5/12/25<td class="k d">Complete<td class="z"><u>Figma</u><td class="z st">Pending group review.</tr>
<tr><th>15<td><td><td><td><td><td><td><td><td><td></tr>
<tr class="h31"><th>16<td class="z">Deliver | Community Tenant Management | Customer Central<td class="k d">Complete<td class="k d">Complete<td class="k d">Complete<td style="background:#d9ead3">3/31/25<td style="background:#d9ead3">4/8/25<td class="z">-<td class="k d">Complete<td class="z"><u>Figma</u><td class="z st">Reviewed by all. Pending final<br>change was auto-default field</tr>
<tr><th>17<td class="z">Deliver | Community Tenant Management | Purchase/Renew<td class="k d">Complete<td class="k d">Complete<td class="k d">Complete<td style="background:#d9ead3">3/31/25<td style="background:#d9ead3">4/8/25<td class="z">-<td class="k d">Complete<td class="z"><u>Figma</u><td class="z">Pending group review.</tr>
<tr><th>18<td class="z">Deliver | Community Tenant Management | Sandbox Exemption<td class="k d">Complete<td class="k d">Complete<td class="k d">Complete<td style="background:#d9ead3">4/7/25<td style="background:#d9ead3">4/15/25<td class="z">-<td class="k d">Complete<td class="z"><u>Figma</u><td class="z">Pending progress bar review pending</tr>
<tr><th>19<td class="z">Deliver | Community Tenant Management | Refresh Tenant<td class="k d">Complete<td class="k d">Complete<td class="k d">Complete<td style="background:#d9ead3">4/7/25<td style="background:#d9ead3">4/15/25<td class="z">-<td class="k d">Complete<td class="z"><u>Figma</u><td class="z">Pending progress bar review pending</tr>
<tr><th>20<td class="z">Deliver | Community Tenant Management | Delete<td class="k d">Complete<td class="k d">Complete<td class="k d">Complete<td style="background:#d9ead3">4/7/25<td style="background:#d9ead3">4/15/25<td class="z">-<td class="k d">Complete<td class="z"><u>Figma</u><td class="z st">Pending Hi-Fi 4/1</tr>
<tr><th>21<td class="z">Deliver | Community Tenant Management | Setup Feature<td class="r d">Pending Review<td class="v d">Pending UX Review<td class="a d">Pending Partner Review<td class="z">4/7/25<td class="z">4/15/25<td class="z">-<td class="q d">Pending<td class="z">Figma<td class="z"></tr>
<tr><th>22<td class="z">Deliver | Community Tenant Management | Setup Grid<td class="r d">Pending Review<td class="v d">Pending UX Review<td class="a d">Pending Partner Review<td class="z">4/7/25<td class="z">4/15/25<td class="z">-<td class="q d">Pending<td class="z"><u>Figma</u><td class="z st">Pending Hi-Fi 4/1</tr>
<tr><th>23<td><td><td><td><td><td><td><td><td><td></tr>
<tr><th>24<td class="z">Deliver | Community Tenant Management | Implementer Access (Provision)<td class="r d">Pending Review<td class="v d">Pending UX Review<td class="a d">Pending Partner Review<td class="z"><td class="z"><td class="z">-<td class="q d">Pending<td class="z">Lo-Fi<td class="z">Pending Hi-Fi</tr>
<tr><th>25<td class="z">Deliver | Community Tenant Management | Implementer Access (Deprovision)<td class="r d">Pending Review<td class="v d">Pending UX Review<td class="a d">Pending Partner Review<td class="z"><td class="z"><td class="z">-<td class="q d">Pending<td class="z">Lo-Fi<td class="z">Pending Hi-Fi</tr>
<tr><th>26<td><td><td><td><td><td><td><td><td><td></tr>
<tr><th>27<td class="z"><td class="r"><td class="v"><td class="a"><td class="z"><td class="z"><td class="z"><td class="q"><td class="z"><td class="z"></tr>
</table></div>
<svg class="c" width="1478" height="984">
<rect width="1478" height="52" fill="#1f2020"/>
<path d="M0 52a12 12 0 0 1 12-12H1125a11 11 0 0 0 11-11V16a10 10 0 0 1 10-10H1250a10 10 0 0 1 10 10V29a11 11 0 0 0 11 11H1466a12 12 0 0 1 12 12V121H0Z" fill="#3c3c3c"/>
<path d="M0 .5H1478" stroke="#666"/>
<rect x="121" y="46" width="1164" height="34" rx="17" fill="#282828"/>
<circle cx="137" cy="63" r="11" fill="#3f3f3f"/>
<circle cx="27" cy="20" r="6" fill="#ed6a5e"/><circle cx="47" cy="20" r="6" fill="#f5bf4f"/><circle cx="67" cy="20" r="6" fill="#61c554"/>
<use href="#ctabs"/>
<g font-size="13.5" fill="url(#tf)"><text x="124" y="25">Workday P</text><text x="254.5" y="25">Jesse and</text><text x="384.8" y="25">Google Ge</text><text x="515" y="25">Jesse Reg</text><text x="645.4" y="25">My Apps D</text><text x="775.7" y="25">Search res</text><text x="906" y="25">How to Ge</text><text x="1036.3" y="25">Home - Go</text><text x="1166.5" y="25">Planning -</text><text x="1297" y="25">Tenant Pur</text></g>
<text x="157" y="68" font-size="14" fill="#e3e3e3" textLength="863" lengthAdjust="spacingAndGlyphs">docs.google.com/spreadsheets/d/1RreBeztDMK6HGWeb7VbtIJ3LNZ1gPjm_DQppXf8jgMg/edit?gid=1709742405#gid=1709742405</text>
<text x="1416" y="67" font-size="11" fill="#e3e3e3">J</text>
<g font-size="12.5" fill="#d8d8d8"><text x="44.5" y="104" textLength="114" lengthAdjust="spacingAndGlyphs">Workday Bookmarks</text><text x="248" y="104" textLength="20" lengthAdjust="spacingAndGlyphs">WD</text><text x="311.5" y="104" textLength="24" lengthAdjust="spacingAndGlyphs">SUV</text><text x="375" y="104" textLength="28" lengthAdjust="spacingAndGlyphs">Drive</text><text x="446" y="104" textLength="28" lengthAdjust="spacingAndGlyphs">PLAT</text><text x="517.5" y="104" textLength="91" lengthAdjust="spacingAndGlyphs">BT - Community</text><text x="652.5" y="104" textLength="64" lengthAdjust="spacingAndGlyphs">NSC Admin</text></g>
<use href="#sheet" x="22" y="138"/>
<text x="61" y="152" font-size="18" fill="#222" textLength="104" lengthAdjust="spacingAndGlyphs">Planning - JR</text>
<g font-size="14" fill="#333"><text x="62" y="173">File</text><text x="101" y="173">Edit</text><text x="142" y="173">View</text><text x="188" y="173">Insert</text><text x="242" y="173">Format</text><text x="305" y="173">Data</text><text x="352" y="173">Tools</text><text x="402" y="173">Extensions</text><text x="488" y="173">Help</text></g>
<rect x="1241" y="131" width="125" height="40" rx="20" fill="#c2e7ff"/><path d="M1332 131V171" stroke="#fff"/>
<use href="#chead"/>
<text x="1285" y="156" font-size="15" fill="#222" textLength="39" lengthAdjust="spacingAndGlyphs">Share</text>
<circle cx="1442" cy="151" r="16" fill="#5d4037"/><text x="1442" y="157" font-size="16" fill="#fff" text-anchor="middle">J</text>
<rect x="16" y="187" width="1390" height="40" rx="20" fill="#edf2fa"/>
<use href="#tbar" y="207"/>
<g fill="none" stroke="#444" stroke-width="1.3"><use href="#vtop" x="956" y="207"/></g>
<g fill="#444" font-size="13"><text x="197" y="212" textLength="37" lengthAdjust="spacingAndGlyphs">100%</text><text x="289" y="212" text-anchor="middle">$</text><text x="321" y="212" text-anchor="middle">%</text><text x="352" y="208" text-anchor="middle" font-size="12">.0</text><text x="385" y="208" text-anchor="middle" font-size="12">.00</text><text x="418" y="212" text-anchor="middle" font-size="12">123</text><text x="454" y="212" textLength="47" lengthAdjust="spacingAndGlyphs" font-size="14">Barlow</text><text x="593" y="212" text-anchor="middle">8</text><text x="661" y="213" text-anchor="middle" font-weight="700" font-size="15" fill="#0b3a8a">B</text><text x="693" y="213" text-anchor="middle" font-style="italic" font-size="16" font-family="Liberation Serif">I</text><text x="758" y="210" text-anchor="middle">A</text><text x="1258" y="213" text-anchor="middle" font-size="15">Σ</text></g>
<path d="M348 216H356M350 214L348 216 350 218M381 216H389M387 214L389 216 387 218" stroke="#444" fill="none"/>
<rect x="0" y="235" width="1424" height="28" fill="#fff"/>
<path d="M106 237V259" stroke="#c7c7c7"/><use href="#tri" x="90" y="249"/>
<text x="14" y="253" font-size="13" fill="#222">J1</text>
<text x="124" y="254" font-size="14" font-style="italic" fill="#888">fx</text>
<rect x="1244" y="235" width="162" height="24" rx="12" fill="#d8e5fb"/><use href="#gem" transform="translate(1260 247) scale(.6)"/>
<text x="1272" y="252" font-size="13" fill="#222" textLength="122" lengthAdjust="spacingAndGlyphs">Summarize this table</text>
<rect x="1269" y="289" width="142" height="54" fill="none" stroke="#1a66d8" stroke-width="2"/>
<rect y="934" width="1424" height="13" fill="#fff"/><rect x="49" y="936" width="873" height="9" rx="4.5" fill="#d8dbe0"/>
<rect x="1411" y="264" width="12" height="670" fill="#fbfbfb"/><rect x="1412" y="289" width="9" height="148" rx="4" fill="#dadce0"/>
<rect y="947" width="1478" height="37" fill="#f9fbfd"/><path d="M0 947H1424" stroke="#e0e0e0"/>
<use href="#side"/>
<use href="#tsym"/>
<rect x="270" y="947" width="128" height="34" fill="#dfe8f8"/>
<rect x="270" y="981" width="128" height="3" fill="#0f0"/><rect x="398" y="981" width="185" height="3" fill="#0f0"/><rect x="583" y="981" width="199" height="3" fill="#ff0"/><rect x="782" y="981" width="141" height="3" fill="#0f0"/><rect x="923" y="981" width="162" height="3" fill="#f00"/><rect x="1085" y="981" width="137" height="3" fill="#f00"/><rect x="1222" y="981" width="23" height="3" fill="#f00"/>
<g font-size="14.5" fill="#444">
<text x="146" y="971" textLength="92" lengthAdjust="spacingAndGlyphs">Planning - JR</text>
<text x="281" y="971" fill="#0b57d0" textLength="85" lengthAdjust="spacingAndGlyphs">TM Delivery</text>
<text x="410" y="971" textLength="144" lengthAdjust="spacingAndGlyphs">Tenant Management</text>
<text x="622" y="971" textLength="128" lengthAdjust="spacingAndGlyphs">Case Management</text>
<text x="794" y="971" textLength="97" lengthAdjust="spacingAndGlyphs">CC/SF Library</text>
<text x="936" y="971" textLength="118" lengthAdjust="spacingAndGlyphs">Content Tracking</text>
<text x="1098" y="971" textLength="93" lengthAdjust="spacingAndGlyphs">Case Routing</text>
<text x="1235" y="971">C</text>
</g>
<ellipse cx="606" cy="966" rx="9" ry="10" fill="#d8dfe8"/><text x="606" y="970" font-size="11" text-anchor="middle" fill="#444">3</text>
<use href="#tri" x="254" y="966"/><use href="#tri" x="383" y="966"/><use href="#tri" x="567" y="966"/><use href="#tri" x="765" y="966"/><use href="#tri" x="907" y="966"/><use href="#tri" x="1069" y="966"/><use href="#tri" x="1206" y="966"/>
<path d="M1273 959L1268 966 1273 973M1307 959L1312 966 1307 973" fill="none" stroke="#777" stroke-width="1.3"/>
</svg>
</div>

<svg class="c" width="1920" height="160" style="top:3600px;z-index:1">
<g font-size="24" fill="#fff" stroke="#fff" stroke-width=".35">
<text x="224.5" y="34" textLength="1416" lengthAdjust="spacingAndGlyphs">I created a content tracker for the team to document unclear or inconsistent language across the Customer Center. The tracker</text>
<text x="224.5" y="74" textLength="1420" lengthAdjust="spacingAndGlyphs">included direct links to the relevant sandbox locations, space for proposed copy edits, and a status column to monitor what had</text>
<text x="224.5" y="114" textLength="1340" lengthAdjust="spacingAndGlyphs">been reviewed versus what had been implemented. It was designed to be reusable across other areas of the experience.</text>
</g>
</svg>

<!-- WINDOW 4 -->
<div class="w w4" style="left:227px;top:3773px;width:1458px;height:948px;border-radius:0;box-shadow:none;z-index:2">
<div class="s" style="top:151px;width:1386px;height:749px"><table><colgroup><col style="width:49px"><col style="width:155px"><col style="width:103px"><col style="width:17px"><col style="width:124px"><col style="width:17px"><col style="width:515px"><col style="width:17px"><col style="width:31px"><col style="width:75px"><col style="width:17px"><col style="width:266px"></colgroup>
<tr class="l h26"><th><th>A<th>B<th>C<th>D<th>E<th>F<th>G<th style="background:#d3e3fd">H<th>I<th>J<th>K</tr>
<tr class="tp" style="height:27px"><th>1<td style="background:#ff6d01;border-top:2px solid #ff6d01;border-right:0;font-weight:700">4 / 40 Reviewed<td style="background:#ff6d01;border-top:2px solid #ff6d01;font-weight:700">10%<td colspan="9" style="background:linear-gradient(90deg,#ff6d01 133px,#f9cb9c 133px);border-top:3px solid #ff6d01;border-bottom:3px solid #ff6d01"></tr>
<tr class="tp" style="height:27px"><th>2<td style="background:#fff2cc;border-right:0;font-weight:700">0 / 40 Completed<td style="background:#fff2cc;font-weight:700">0%<td colspan="9" style="background:#fff2cc;border-bottom:3px solid #ffd966;border-left:0"></tr>
<tr><th style="background:linear-gradient(#cfcfcf 6px,#fff 6px);border-bottom:1px solid #222">3<td colspan="11" style="background:linear-gradient(#cfcfcf 6px,#fff 6px);border-right:0;border-bottom:1px solid #222"></tr>
<tr style="height:37px"><th>4<td colspan="11" class="sc"><span style="left:737px">Landing Page</span></tr>
<tr style="height:36px"><th>5<td colspan="2" class="f">Left Rail - Filters (Tenants)<td class="o1"><td>Location: <u>WDUAT</u><td class="o1"><td>Attributes, Charge Type, Status<td class="o1"><td class="cb or"><i></i><td class="or sk">Reviewed<td class="o1"><td class="pe">Proposed Edit(s)</tr>
<tr style="height:36px"><th>6<td colspan="2" class="f">Left Rail - Filters (Request)<td class="o1"><td>Location: <u>WDUAT</u><td class="o1"><td>Request Type, Status<td class="o1"><td class="cb or"><i></i><td class="or sk">Reviewed<td class="o1"><td class="pe">Proposed Edit(s)</tr>
<tr style="height:36px"><th>7<td colspan="2" class="f">Tabs Categories<td class="o1"><td>Location: <u>WDUAT</u><td class="o1"><td>Request Type, Status<td class="o1"><td class="cb or"><i></i><td class="or sk">Reviewed<td class="o1"><td class="pe">Proposed Edit(s)</tr>
<tr style="height:36px"><th style="background:#d3e3fd;color:#0b57d0;font-weight:700">8<td colspan="2" class="f">Table Categories (Tenants)<td class="o1"><td>Location: <u>WDUAT</u><td class="o1"><td>Name, Type, Status, Last Refreshed, Expiration Date, Purpose of Tenant<td class="o1"><td class="cb or"><i></i><td class="or sk">Reviewed<td class="o1"><td class="pe">Proposed Edit(s)</tr>
<tr style="height:36px"><th>9<td colspan="2" class="f">Table Categories (Request)<td class="o1"><td>Location: <u>WDUAT</u><td class="o1"><td>Request, Status, Tenant Name, Requested Date, Maintenance Window<td class="o1"><td class="cb"><i></i><td>Reviewed<td class="o1"><td class="pe">Proposed Edit(s)</tr>
<tr style="height:36px"><th>10<td colspan="2" class="f">Primary Action Button<td class="o1"><td>Location: <u>WDUAT</u><td class="o1"><td>Create Tenant Request<td class="o1"><td class="cb"><i></i><td>Reviewed<td class="o1"><td class="pe">Proposed Edit(s)</tr>
<tr style="height:36px"><th>11<td colspan="11" class="sc"><span style="left:723px">Customer Central</span></tr>
<tr style="height:48px"><th>12<td colspan="2" class="f">In page message (top/blue)<td class="o1"><td>Location: <u>WDUAT</u><td class="o1"><td>For a Security/Customer Central Administrator password reset, please<br>raise a <b>Product Support &gt; Operations &gt; Tenant Login</b> case.<td class="o1"><td class="cb"><i></i><td>Reviewed<td class="o1"><td class="pe">Proposed Edit(s)</tr>
<tr style="height:36px"><th>13<td colspan="2" class="f">Page title sub-description<td class="o1"><td>Location: <u>WDUAT</u><td class="o1"><td>Please complete the form fields and click Submit<td class="o1"><td class="cb"><i></i><td>Reviewed<td class="o1"><td class="pe">Proposed Edit(s)</tr>
<tr style="height:36px"><th>14<td colspan="2" class="f">Form field 1<td class="o1"><td>Location: <u>WDUAT</u><td class="o1"><td>Current Date/Time in PT <em>(first field not bold)</em><td class="o1"><td class="cb"><i></i><td>Reviewed<td class="o1"><td class="pe">Proposed Edit(s)</tr>
<tr style="height:56px"><th>15<td colspan="2" class="f">Form field 2<td class="o1"><td>Location: <u>WDUAT</u><td class="o1"><td><em>(Title)</em> Customer Central Access Details <em>(Description)</em> What role/s do<br>you need created? <em>(Prompt)</em> --none--<td class="o1"><td class="cb"><i></i><td>Reviewed<td class="o1"><td class="pe">Proposed Edit(s)</tr>
<tr style="height:79px"><th>16<td colspan="2" class="f">Form field 3<td class="o1"><td>Location: <u>WDUAT</u><td class="o1"><td>If requesting a new Security Administrator, please confirm no Security<br>Administrator IDs exist within the Customer Central Tenant who can<br>create a new Security Administrator <em>(Options: Yes, No, Not Applicable)</em><td class="o1"><td class="cb"><i></i><td>Reviewed<td class="o1"><td class="pe">Proposed Edit(s)</tr>
<tr style="height:36px"><th>17<td colspan="2" class="f">Form field 4<td class="o1"><td>Location: <u>WDUAT</u><td class="o1"><td><em>(Title)</em> Tenant <em>(Prompt)</em> Please Select Tenant<td class="o1"><td class="cb"><i></i><td>Reviewed<td class="o1"><td class="pe">Proposed Edit(s)</tr>
<tr style="height:36px"><th>18<td colspan="2" class="f">Form field 5<td class="o1"><td>Location: <u>WDUAT</u><td class="o1"><td><em>(Title)</em> Subject <em>(Prompt)</em> ex time off request issues for mobile users<td class="o1"><td class="cb"><i></i><td>Reviewed<td class="o1"><td class="pe">Proposed Edit(s)</tr>
<tr style="height:56px"><th>19<td colspan="2" class="f">Section Title Case<td class="o1"><td>Location: <u>WDUAT</u><td class="o1"><td style="vertical-align:top;padding-top:8px"><em>(Case Team &amp; Attachments become different weights. Case Data<br>(Bold/Regular/sizing) Tenant Name)</em><td class="o1"><td class="cb"><i></i><td>Reviewed<td class="o1"><td class="pe">Proposed Edit(s)</tr>
</table></div>
<svg class="c" width="1458" height="948">
<use href="#sheet" transform="translate(23 14) scale(1.08 1.15)"/>
<text x="66" y="31" font-size="20" fill="#222" textLength="139" lengthAdjust="spacingAndGlyphs">Content Review</text>
<g fill="none" stroke="#444" stroke-width="1.3"><use href="#star" x="239" y="24"/><use href="#mv" x="273" y="24"/><use href="#cloud" x="308" y="24"/>
<use href="#hist" x="1034" y="30"/><use href="#cmts" x="1089" y="30"/><path d="M1139 24H1147V36H1139ZM1147 28L1153 24V36L1147 32"/><use href="#tri" x="1168" y="28"/></g>
<text x="327" y="28" font-size="13" fill="#5f6368" textLength="89" lengthAdjust="spacingAndGlyphs">Saved to Drive</text>
<g font-size="14.5" fill="#333"><text x="67" y="53">File</text><text x="109" y="53">Edit</text><text x="154" y="53">View</text><text x="204" y="53">Insert</text><text x="262" y="53">Format</text><text x="330" y="53">Data</text><text x="381" y="53">Tools</text><text x="436" y="53">Extensions</text><text x="530" y="53">Help</text></g>
<rect x="1204" y="8" width="134" height="44" rx="22" fill="#c2e7ff"/><path d="M1302 8V52" stroke="#fff"/>
<path d="M1226 26H1236V38H1226ZM1228 26V22a3 3 0 0 1 6 0V26" fill="none" stroke="#222" stroke-width="1.4"/>
<text x="1249" y="36" font-size="15" fill="#222" textLength="44" lengthAdjust="spacingAndGlyphs">Share</text>
<use href="#tri" x="1319" y="31"/><use href="#gem" x="1369" y="30"/>
<ellipse cx="1419.5" cy="30" rx="17.5" ry="18" fill="#db4437"/><text x="1419.5" y="34" font-size="10" font-weight="700" fill="#fff" text-anchor="middle">dIBAY</text>
<rect x="18.6" y="68" width="1362" height="44" rx="22" fill="#edf2fa"/>
<g transform="translate(0 90)" fill="none" stroke="#444" stroke-width="1.3">
<use href="#search" x="46"/><use href="#undo" x="83"/><use href="#redo" x="118"/><use href="#print" x="152"/><use href="#paint" x="186"/><use href="#tri" x="273"/><use href="#tri" x="570"/>
<path d="M293-14V14M476-14V14M591-14V14M697-14V14M845-14V14M974-14V14M1160-14V14" stroke="#c7c7c7"/>
<path d="M602 0H614M672 0H684M678-6V6"/>
<rect x="626" y="-13" width="36" height="26" rx="4"/>
<rect x="701" y="-16" width="33" height="32" rx="5" fill="#c2dbfb" stroke="none"/><rect x="771" y="-16" width="33" height="32" rx="5" fill="#c2dbfb" stroke="none"/>
<use href="#strike" x="787"/><use href="#bucket" x="868"/><rect x="857" y="9" width="24" height="5" fill="#ff6d01" stroke="none"/><rect x="813" y="9" width="22" height="5" fill="#000" stroke="none"/>
<use href="#border" x="904"/><use href="#merge" x="939"/><use href="#tri" x="963"/><use href="#align" x="994"/><use href="#tri" x="1013"/><use href="#valign" x="1038"/><use href="#tri" x="1057"/><use href="#wrap" x="1082"/><use href="#tri" x="1102"/><use href="#rot" x="1126"/><use href="#tri" x="1146"/>
<path d="M1182-6v1M1182 0v1M1182 6v1" stroke-width="2"/><use href="#caret" x="1350"/>
</g>
<g fill="#444" font-size="13"><text x="215" y="95" textLength="40" lengthAdjust="spacingAndGlyphs">100%</text><text x="314" y="95" text-anchor="middle">€</text><text x="349" y="95" text-anchor="middle">%</text><text x="382" y="91" text-anchor="middle" font-size="12">.0</text><text x="419" y="91" text-anchor="middle" font-size="12">.00</text><text x="454" y="95" text-anchor="middle" font-size="12">123</text><text x="492.6" y="95" textLength="60" lengthAdjust="spacingAndGlyphs" font-size="14">Incons...</text><text x="644" y="95" text-anchor="middle">10</text><text x="717.5" y="96" text-anchor="middle" font-weight="700" font-size="15" fill="#0b3a8a">B</text><text x="752" y="96" text-anchor="middle" font-style="italic" font-size="16" font-family="Liberation Serif">I</text><text x="823" y="94" text-anchor="middle">A</text></g>
<path d="M378 99H386M380 97L378 99 380 101M415 99H423M421 97L423 99 421 101" stroke="#444" fill="none"/>
<rect x="0" y="120" width="1386" height="31" fill="#fff"/>
<path d="M115 124V148" stroke="#c7c7c7"/><use href="#tri" x="98" y="136"/>
<text x="14" y="140" font-size="13" fill="#222">H8</text>
<text x="130" y="141" font-size="14" font-style="italic" fill="#888">fx</text>
<text x="153" y="140" font-size="12.5" fill="#222" textLength="32" lengthAdjust="spacingAndGlyphs">TRUE</text>
<rect x="997" y="397" width="31" height="36" fill="none" stroke="#1a73e8" stroke-width="2"/><circle cx="1028" cy="433" r="4.5" fill="#0b57d0"/>
<rect y="900" width="1400" height="15" fill="#fff"/><rect x="52" y="902" width="823" height="10" rx="5" fill="#d8dbe0"/>
<rect x="1386" y="151" width="14" height="749" fill="#fafafa"/><rect x="1388" y="237" width="8" height="193" rx="4" fill="#dadce0"/>
<rect y="915" width="1458" height="33" fill="#f9fbfd"/><path d="M0 915H1400" stroke="#e0e0e0"/>
<g transform="translate(1429)"><use href="#cal" y="92"/><use href="#keep" y="153"/><use href="#tasks" y="214"/><use href="#cont" y="274"/><use href="#maps" y="335"/><path d="M-10 383H10" stroke="#dadce0"/><use href="#plus" y="432"/></g>
<path d="M1426 926L1431 933 1426 940" fill="none" stroke="#444" stroke-width="1.3"/>
<path d="M61 930H73M67 924V936M104 924H116M104 929.5H116M104 935H116" fill="none" stroke="#444" stroke-width="1.5"/>
<rect x="275" y="915" width="205" height="33" fill="#dfe8f8"/>
<g font-size="15" fill="#444">
<text x="159.5" y="941" textLength="81" lengthAdjust="spacingAndGlyphs">Dashboard</text>
<text x="288" y="941" fill="#0b57d0" textLength="159" lengthAdjust="spacingAndGlyphs">Tenant Management</text>
<text x="494" y="941" textLength="169" lengthAdjust="spacingAndGlyphs">Contacts Management</text>
<text x="713" y="941" textLength="139" lengthAdjust="spacingAndGlyphs">Case Management</text>
<text x="899" y="941" textLength="59" lengthAdjust="spacingAndGlyphs">Reports</text>
<text x="1007" y="941" textLength="62" lengthAdjust="spacingAndGlyphs">Security</text>
</g>
<use href="#tri" x="258" y="936"/><use href="#tri" x="463" y="936"/><use href="#tri" x="680" y="936"/><use href="#tri" x="868" y="936"/><use href="#tri" x="975" y="936"/><use href="#tri" x="1087" y="936"/>
</svg>
</div>

</div></body></html>
